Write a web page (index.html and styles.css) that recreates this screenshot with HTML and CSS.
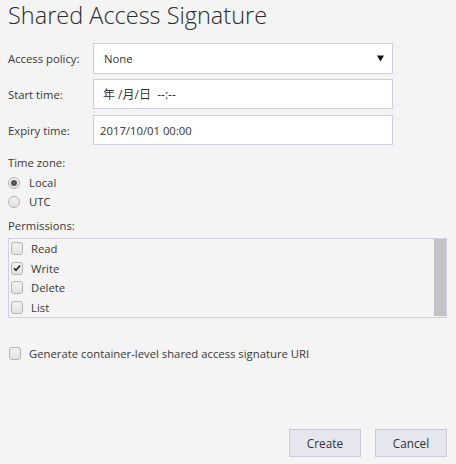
FILE: index.html
```html
<!DOCTYPE html>
<html>
<head>
<meta charset="utf-8">
<link rel="stylesheet" href="styles.css">
</head>
<body>
<div class="page">
  <h1 class="title">Shared Access Signature</h1>
  <div class="fields">
    <div class="label">Access policy:</div>
    <div class="select"><span>None</span><svg class="arrow" viewBox="0 0 7 7" width="7" height="7"><path d="M0 0.5 H7 L3.5 6.5 Z" fill="#111"/></svg></div>
    <div class="label">Start time:</div>
    <div class="input cjk">年 /月/日&nbsp; --:--</div>
    <div class="label">Expiry time:</div>
    <div class="input">2017/10/01 00:00</div>
  </div>
  <div class="section-label tz">Time zone:</div>
  <div class="radio-row"><span class="radio on"></span>Local</div>
  <div class="radio-row"><span class="radio"></span>UTC</div>
  <div class="section-label perm">Permissions:</div>
  <div class="perm-box">
    <div class="perm-list">
      <div class="check-row"><span class="check"></span>Read</div>
      <div class="check-row"><span class="check on"><svg viewBox="0 0 12 12" width="12" height="12"><path d="M2.4 6.3 L4.8 8.8 L9.6 3.0" fill="none" stroke="#222" stroke-width="2"/></svg></span>Write</div>
      <div class="check-row"><span class="check"></span>Delete</div>
      <div class="check-row"><span class="check"></span>List</div>
    </div>
    <div class="scrollbar"></div>
  </div>
  <div class="check-row generate"><span class="check"></span>Generate container-level shared access signature URI</div>
  <div class="buttons">
    <div class="btn">Create</div>
    <div class="btn">Cancel</div>
  </div>
</div>
</body>
</html>
```
FILE: styles.css
```css
html, body {
  margin: 0;
  padding: 0;
  background: #f4f4f4;
}
body {
  font-family: "Open Sans", "Noto Sans CJK JP", sans-serif;
  font-size: 11.3px;
  color: #383838;
  width: 456px;
  height: 464px;
  overflow: hidden;
}
.page {
  padding: 0 9px 0 8px;
  display: flex;
  flex-direction: column;
}
.title {
  margin: 0;
  height: 43px;
  font-size: 23.5px;
  font-weight: 300;
  line-height: 31px;
  color: #2b2b2b;
}
.fields {
  display: grid;
  grid-template-columns: 85px 300px;
  grid-auto-rows: 30px;
  row-gap: 6px;
  align-items: center;
}
.select, .input {
  box-sizing: border-box;
  height: 30px;
  background: #fff;
  border: 1px solid #cfcfdf;
  display: flex;
  align-items: center;
  color: #333;
}
.select {
  justify-content: space-between;
  padding: 0 8px 0 10px;
  height: 31px;
}
.arrow {
  display: block;
}
.input {
  padding-left: 6px;
}
.input.cjk {
  padding-left: 9px;
  font-size: 12px;
}
.section-label.tz {
  margin-top: 10px;
  height: 18px;
  line-height: 16px;
}
.radio-row {
  display: flex;
  align-items: center;
  height: 19px;
  gap: 9px;
}
.radio {
  box-sizing: border-box;
  width: 12px;
  height: 12px;
  border-radius: 50%;
  border: 1px solid #b4b4b4;
  background: linear-gradient(#f0f0f0, #e2e2e2);
  display: flex;
  align-items: center;
  justify-content: center;
}
.radio.on::after {
  content: "";
  width: 6px;
  height: 6px;
  border-radius: 50%;
  background: #555;
}
.section-label.perm {
  margin-top: 7px;
  height: 20px;
  line-height: 16px;
}
.perm-box {
  box-sizing: border-box;
  height: 80px;
  border: 1px solid #cfcfdf;
  display: flex;
}
.perm-list {
  flex: 1;
  display: flex;
  flex-direction: column;
  padding-left: 2px;
}
.scrollbar {
  width: 12px;
  height: 77px;
  background: #c2c2c7;
}
.check-row {
  display: flex;
  align-items: center;
  height: 20px;
  gap: 8px;
}
.check {
  box-sizing: border-box;
  width: 12px;
  height: 13px;
  border-radius: 3px;
  border: 1px solid #b4b4b4;
  background: linear-gradient(#f2f2f2, #e3e3e3);
  display: flex;
  align-items: center;
  justify-content: center;
}
.check svg {
  display: block;
}
.generate {
  margin-top: 25px;
  padding-left: 1px;
}
.buttons {
  margin-top: 66px;
  display: flex;
  justify-content: flex-end;
  gap: 14px;
}
.btn {
  box-sizing: border-box;
  width: 72px;
  height: 28px;
  background: #e6e6ee;
  border: 1px solid #cbcbd8;
  display: flex;
  align-items: center;
  justify-content: center;
  color: #333;
  font-size: 11.8px;
}
```
